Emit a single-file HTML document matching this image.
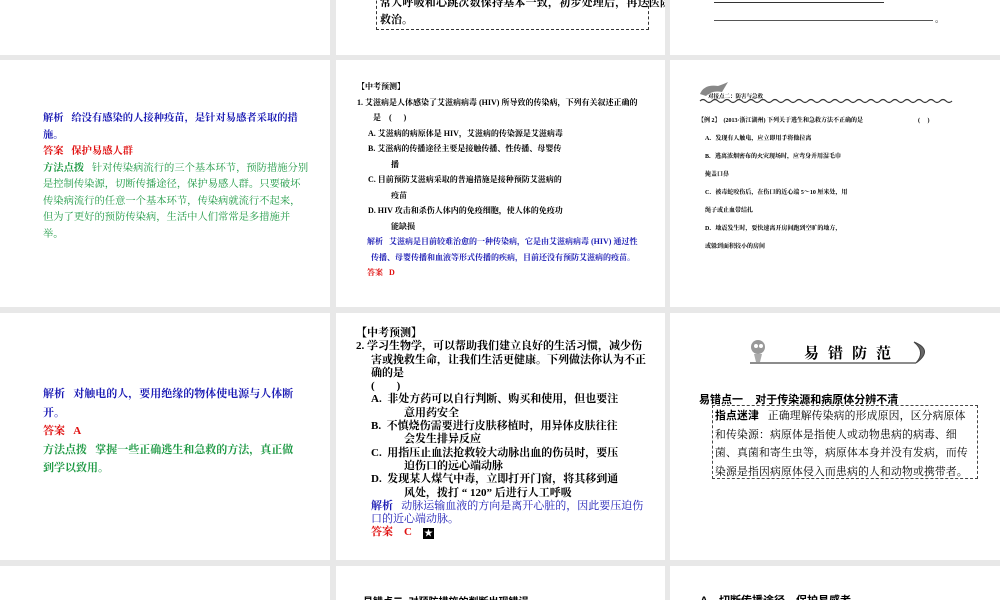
<!DOCTYPE html>
<html><head><meta charset="utf-8"><style>
*{margin:0;padding:0;box-sizing:border-box}
body{width:1000px;height:600px;background:#e8e8e8;position:relative;overflow:hidden;font-family:"Liberation Serif","Noto Serif CJK SC",serif;color:#000}
.s{position:absolute;background:#fff;overflow:hidden}
.t{position:absolute;white-space:nowrap}
.b{font-weight:bold}
.blue{color:#1a1ab4}.red{color:#e01010}.green{color:#1f9a45}
.sans{font-family:"Liberation Sans","Noto Sans CJK SC",sans-serif}
</style></head><body>
<!-- row1 -->
<div class="s" style="left:0;top:0;width:330px;height:55px"></div>
<div class="s" style="left:336px;top:0;width:329px;height:55px">
  <div style="position:absolute;left:40px;top:-10px;width:273px;height:40px;border:1px dashed #333;border-top:none"></div>
  <div class="t b" style="left:44px;top:-6px;font-size:11px;letter-spacing:0.2px">常人呼吸和心跳次数保持基本一致，初步处理后，再送医院</div>
  <div class="t b" style="left:44px;top:11px;font-size:11px">救治。</div>
</div>
<div class="s" style="left:670px;top:0;width:330px;height:55px">
  <div style="position:absolute;left:44px;top:2px;width:170px;height:1px;background:#333"></div>
  <div style="position:absolute;left:44px;top:20px;width:219px;height:1px;background:#555"></div>
  <div class="t" style="left:265px;top:12px;font-size:9px">。</div>
</div>
<!-- row2 -->
<div class="s" style="left:0;top:60px;width:330px;height:247px">
  <div class="t b" style="left:43px;top:51px;font-size:10.3px;line-height:16.5px">
  <div class="blue">解析&nbsp;&nbsp;&nbsp;给没有感染的人接种疫苗，是针对易感者采取的措</div>
  <div class="blue">施。</div>
  <div class="red">答案&nbsp;&nbsp;&nbsp;保护易感人群</div>
  <div class="green">方法点拨&nbsp;&nbsp;&nbsp;<span style="font-weight:normal">针对传染病流行的三个基本环节，预防措施分别</span></div>
  <div class="green" style="font-weight:normal">是控制传染源，切断传播途径，保护易感人群。只要破坏</div>
  <div class="green" style="font-weight:normal">传染病流行的任意一个基本环节，传染病就流行不起来，</div>
  <div class="green" style="font-weight:normal">但为了更好的预防传染病，生活中人们常常是多措施并</div>
  <div class="green" style="font-weight:normal">举。</div>
  </div>
</div>
<div class="s" style="left:336px;top:60px;width:329px;height:247px">
  <div class="t b" style="left:21px;top:19px;font-size:8px;line-height:15.5px">
  <div>【中考预测】</div>
  <div>1. 艾滋病是人体感染了艾滋病病毒 (HIV) 所导致的传染病，下列有关叙述正确的</div>
  <div style="padding-left:16px">是&nbsp;&nbsp;&nbsp;&nbsp;(&nbsp;&nbsp;&nbsp;&nbsp;&nbsp;&nbsp;)</div>
  <div style="padding-left:11px">A. 艾滋病的病原体是 HIV，艾滋病的传染源是艾滋病毒</div>
  <div style="padding-left:11px">B. 艾滋病的传播途径主要是接触传播、性传播、母婴传</div>
  <div style="padding-left:34px">播</div>
  <div style="padding-left:11px">C. 目前预防艾滋病采取的普遍措施是接种预防艾滋病的</div>
  <div style="padding-left:34px">疫苗</div>
  <div style="padding-left:11px">D. HIV 攻击和杀伤人体内的免疫细胞，使人体的免疫功</div>
  <div style="padding-left:34px">能缺损</div>
  <div class="blue" style="padding-left:10px">解析&nbsp;&nbsp;&nbsp;艾滋病是目前较难治愈的一种传染病，它是由艾滋病病毒 (HIV) 通过性</div>
  <div class="blue" style="padding-left:14px">传播、母婴传播和血液等形式传播的疾病，目前还没有预防艾滋病的疫苗。</div>
  <div class="red" style="padding-left:10px">答案&nbsp;&nbsp;&nbsp;D</div>
  </div>
</div>
<div class="s" style="left:670px;top:60px;width:330px;height:247px">
  <svg style="position:absolute;left:28px;top:22px" width="260" height="22">
    <path d="M2 12 Q6 2 20 4 Q26 2 30 0 L24 10 Q14 8 8 14 Z" fill="#888"/>
    <path d="M2 19 q3 -3 6 0 t6 0 t6 0 t6 0 t6 0 t6 0 t6 0 t6 0 t6 0 t6 0 t6 0 t6 0 t6 0 t6 0 t6 0 t6 0 t6 0 t6 0 t6 0 t6 0 t6 0 t6 0 t6 0 t6 0 t6 0 t6 0 t6 0 t6 0 t6 0 t6 0 t6 0 t6 0 t6 0 t6 0 t6 0 t6 0 t6 0 t6 0 t6 0 t6 0 t6 0 t6 0" stroke="#333" fill="none" stroke-width="1.2"/>
  </svg>
  <div class="t b" style="left:38px;top:32px;font-size:5.5px">对接点二：防害与急救</div>
  <div class="t b" style="left:28px;top:52px;font-size:6px;line-height:18px">
  <div>【例 2】&nbsp;&nbsp;(2013·浙江湖州) 下列关于逃生和急救方法不正确的是<span style="padding-left:55px">(&nbsp;&nbsp;&nbsp;&nbsp;&nbsp;)</span></div>
  <div style="padding-left:7px">A．发现有人触电，应立即用手将他拉离</div>
  <div style="padding-left:7px">B．逃离浓烟密布的火灾现场时，应弯身并用湿毛巾</div>
  <div style="padding-left:7px">掩盖口鼻</div>
  <div style="padding-left:7px">C．被毒蛇咬伤后，在伤口的近心端 5～10 厘米处，用</div>
  <div style="padding-left:7px">绳子或止血带结扎</div>
  <div style="padding-left:7px">D．地震发生时，要快速离开房间跑到空旷的地方，</div>
  <div style="padding-left:7px">或躲到面积较小的房间</div>
  </div>
</div>
<!-- row3 -->
<div class="s" style="left:0;top:313px;width:330px;height:247px">
  <div class="t b" style="left:43px;top:72px;font-size:11px;line-height:18.5px">
  <div class="blue">解析&nbsp;&nbsp;&nbsp;对触电的人，要用绝缘的物体使电源与人体断</div>
  <div class="blue">开。</div>
  <div class="red">答案&nbsp;&nbsp;&nbsp;A</div>
  <div class="green">方法点拨&nbsp;&nbsp;&nbsp;掌握一些正确逃生和急救的方法，真正做</div>
  <div class="green">到学以致用。</div>
  </div>
</div>
<div class="s" style="left:336px;top:313px;width:329px;height:247px">
  <div class="t b" style="left:20px;top:14px;font-size:11px;line-height:13.3px">
  <div>【中考预测】</div>
  <div>2. 学习生物学，可以帮助我们建立良好的生活习惯，减少伤</div>
  <div style="padding-left:15px">害或挽救生命，让我们生活更健康。下列做法你认为不正</div>
  <div style="padding-left:15px">确的是</div>
  <div style="padding-left:15px">(&nbsp;&nbsp;&nbsp;&nbsp;&nbsp;&nbsp;&nbsp;&nbsp;)</div>
  <div style="padding-left:15px">A.&nbsp;&nbsp;非处方药可以自行判断、购买和使用，但也要注</div>
  <div style="padding-left:48px">意用药安全</div>
  <div style="padding-left:15px">B.&nbsp;&nbsp;不慎烧伤需要进行皮肤移植时，用异体皮肤往往</div>
  <div style="padding-left:48px">会发生排异反应</div>
  <div style="padding-left:15px">C.&nbsp;&nbsp;用指压止血法抢救较大动脉出血的伤员时，要压</div>
  <div style="padding-left:48px">迫伤口的远心端动脉</div>
  <div style="padding-left:15px">D.&nbsp;&nbsp;发现某人煤气中毒，立即打开门窗，将其移到通</div>
  <div style="padding-left:48px">风处，拨打 “ 120” 后进行人工呼吸</div>
  <div class="blue" style="padding-left:15px">解析&nbsp;&nbsp;&nbsp;<span style="font-weight:normal">动脉运输血液的方向是离开心脏的，因此要压迫伤</span></div>
  <div class="blue" style="padding-left:15px;font-weight:normal">口的近心端动脉。</div>
  <div class="red" style="padding-left:15px">答案&nbsp;&nbsp;&nbsp;&nbsp;C&nbsp;&nbsp;&nbsp;&nbsp;<span style="display:inline-block;width:11px;height:11px;background:#000;color:#fff;font-size:9px;line-height:11px;text-align:center;vertical-align:-1px">★</span></div>
  </div>
</div>
<div class="s" style="left:670px;top:313px;width:330px;height:247px">
  <svg style="position:absolute;left:76px;top:25px" width="190" height="28">
    <circle cx="12" cy="9" r="7" fill="#999"/><circle cx="10" cy="8" r="2" fill="#fff"/><circle cx="15" cy="8" r="2" fill="#fff"/>
    <path d="M8 16 L16 16 L14 24 L10 24 Z" fill="#aaa"/>
    <path d="M4 25 L170 25" stroke="#666" stroke-width="1.5"/>
    <path d="M168 4 Q188 12 170 25 Q180 14 168 4 Z" fill="#666" stroke="#444"/>
  </svg>
  <div class="t b" style="left:134px;top:29px;font-size:15px;letter-spacing:9px">易错防范</div>
  <div class="t b sans" style="left:29px;top:78px;font-size:11px">易错点一&nbsp;&nbsp;&nbsp;&nbsp;对于传染源和病原体分辨不清</div>
  <div style="position:absolute;left:42px;top:92px;width:266px;height:74px;border:1px dashed #444"></div>
  <div class="t" style="left:45px;top:94px;font-size:10.8px;line-height:18.5px;letter-spacing:0.2px">
  <div><b class="sans">指点迷津</b>&nbsp;&nbsp;&nbsp;正确理解传染病的形成原因，区分病原体</div>
  <div>和传染源：病原体是指使人或动物患病的病毒、细</div>
  <div>菌、真菌和寄生虫等，病原体本身并没有发病，而传</div>
  <div>染源是指因病原体侵入而患病的人和动物或携带者。</div>
  </div>
</div>
<!-- row4 -->
<div class="s" style="left:0;top:566px;width:330px;height:34px"></div>
<div class="s" style="left:336px;top:566px;width:329px;height:34px">
  <div class="t b sans" style="left:27px;top:27px;font-size:10px">易错点二&nbsp;&nbsp;对预防措施的判断出现错误</div>
</div>
<div class="s" style="left:670px;top:566px;width:330px;height:34px">
  <div class="t b sans" style="left:30px;top:26px;font-size:11px">A．切断传播途径，保护易感者</div>
</div>
</body></html>
